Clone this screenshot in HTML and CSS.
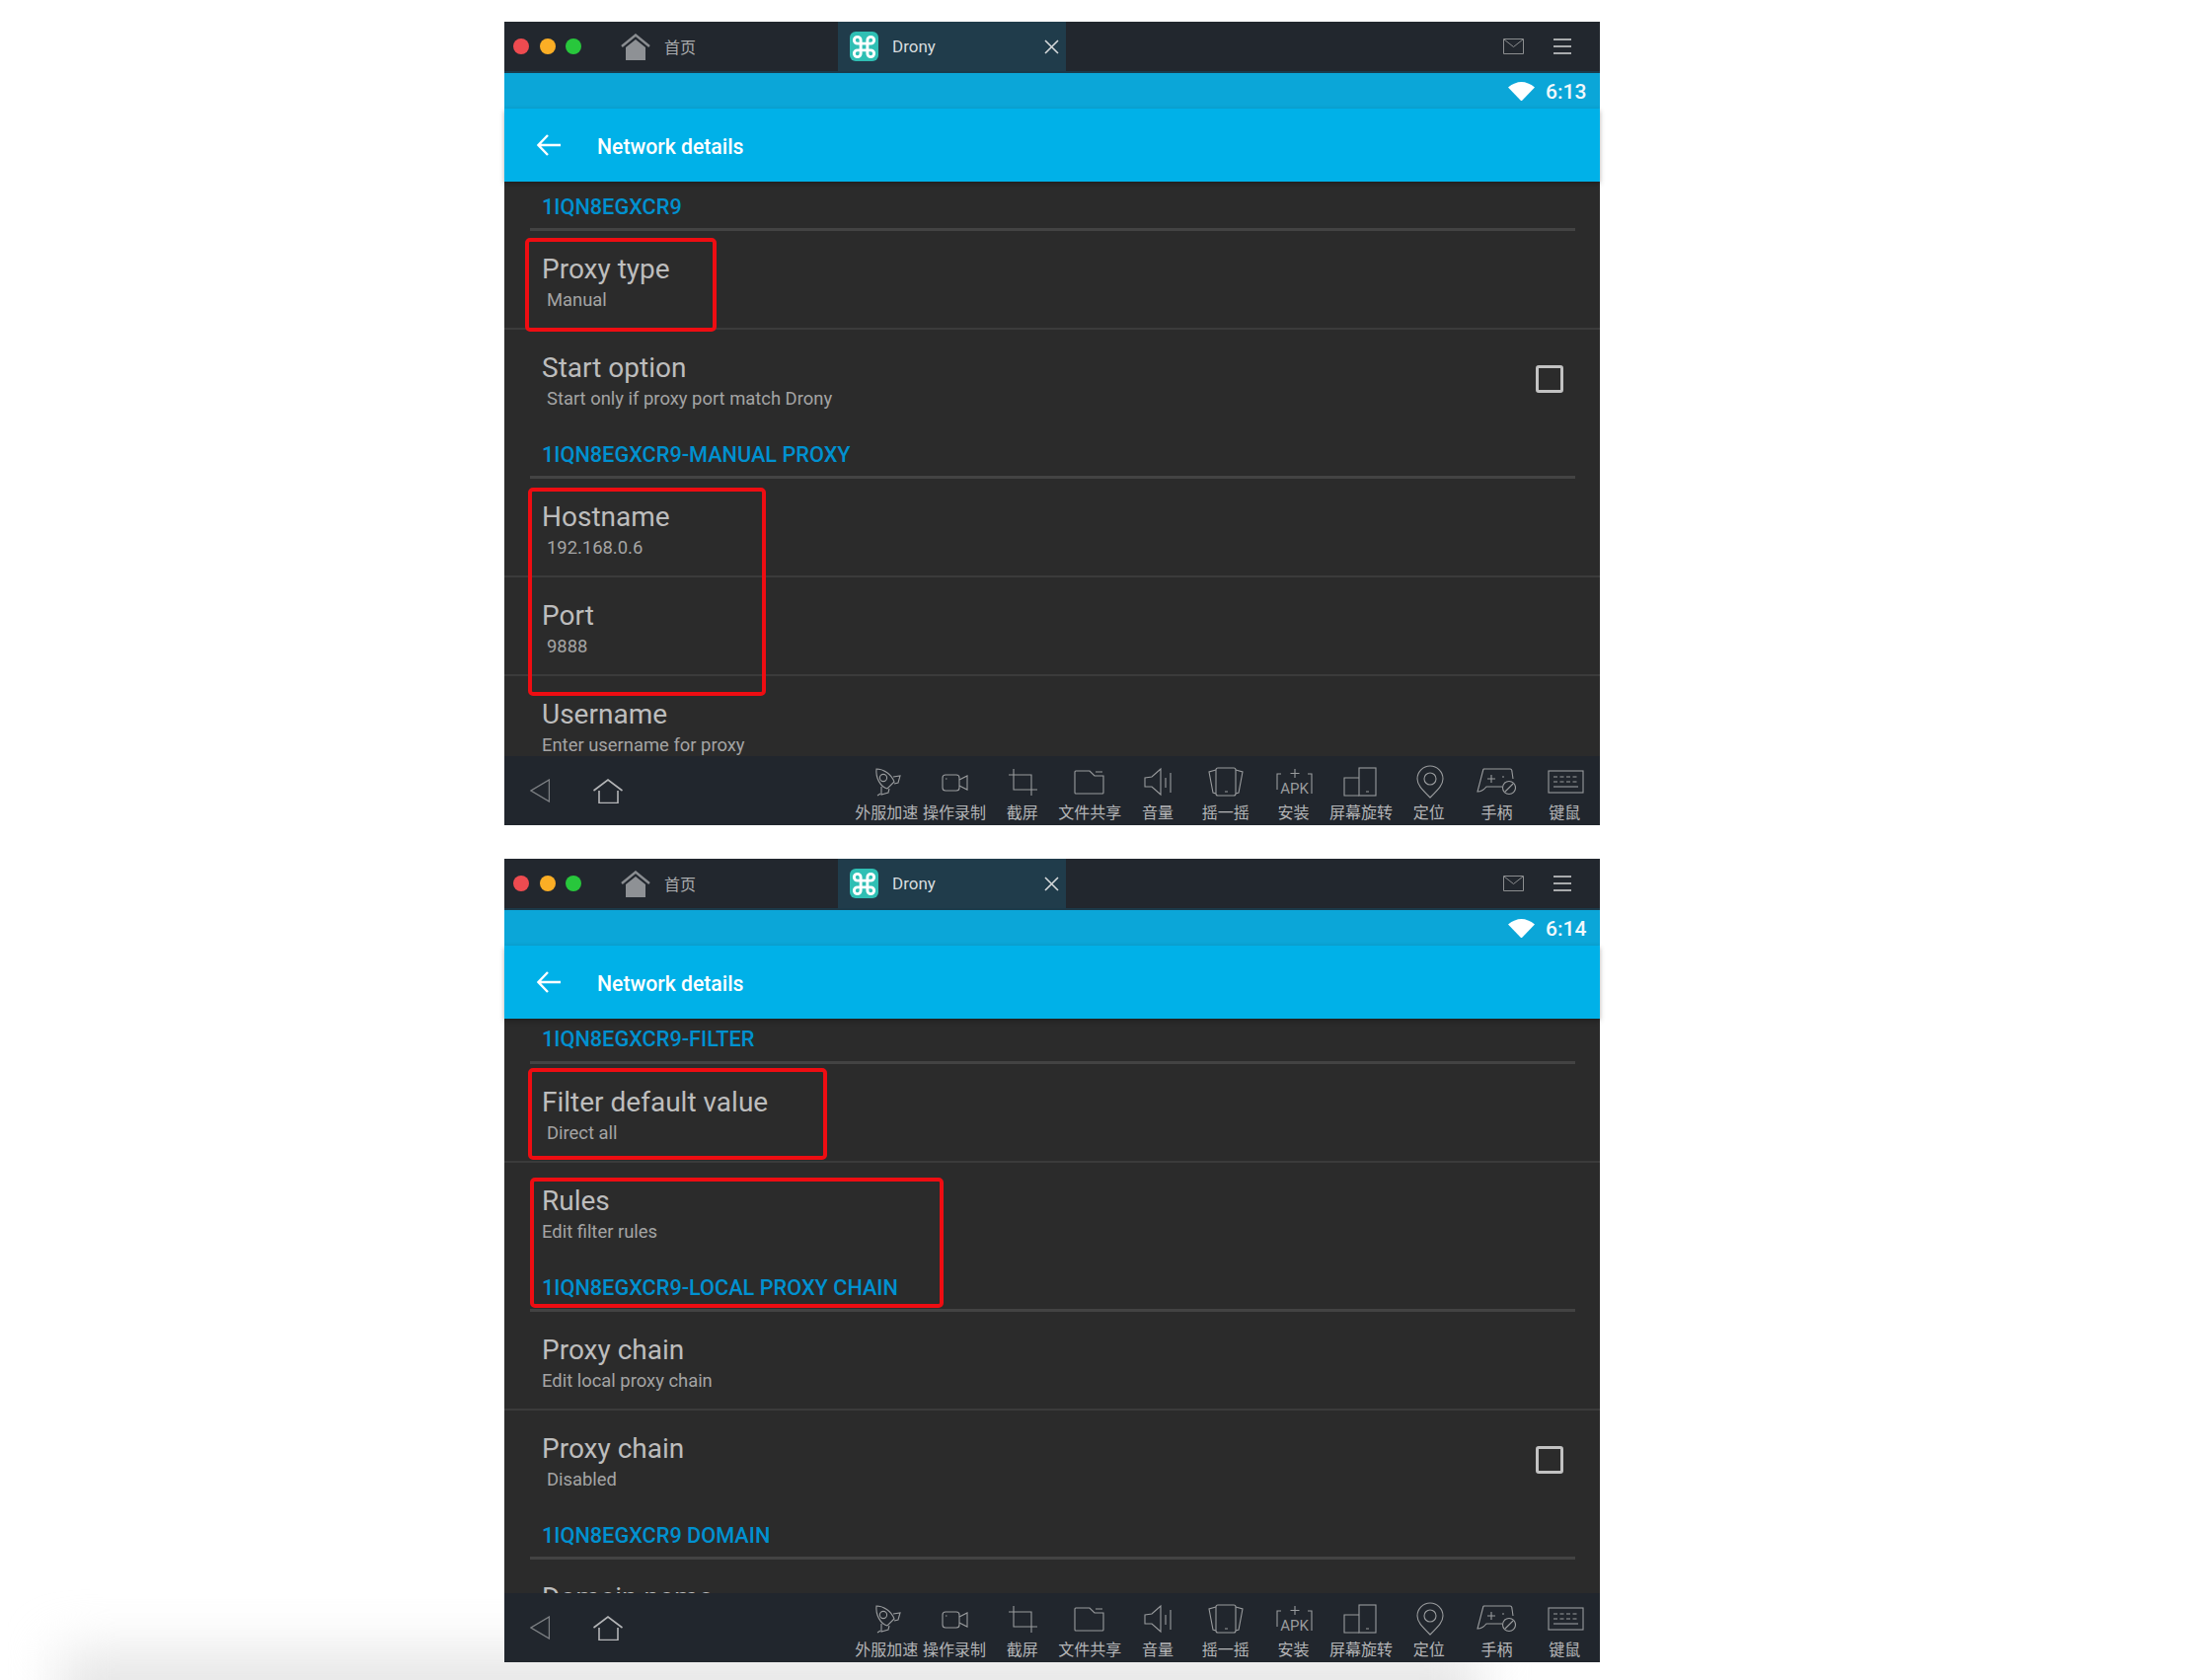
FILE: index.html
```html
<!DOCTYPE html>
<html lang="zh-CN">
<head>
	<meta charset="UTF-8">
	<title>Drony</title>
	<link rel="stylesheet" href="styles.css">
</head>
<body>
	<svg class="sprite" xmlns="http://www.w3.org/2000/svg">
		<symbol id="i-rocket" viewBox="0 0 40 34"><path d="M10 4C17 4 25 9 28 17L21 24C14 22 9 13 10 4Z"/><circle cx="17" cy="13" r="3.6"/><path d="M27 12L34 11 32 18 28 19M15 22L15 30 22 28 23 24M14 29L11 31"/></symbol>
		<symbol id="i-video" viewBox="0 0 40 34"><rect x="8" y="10" width="17" height="16" rx="3"/><path d="M25 15L33 11V25L25 21"/><path d="M11 14h1.5"/></symbol>
		<symbol id="i-crop" viewBox="0 0 40 34"><path d="M11 4V25H35M6 10H29V31"/></symbol>
		<symbol id="i-folder" viewBox="0 0 40 34"><path d="M5 7Q5 6 6 6H20L25 11H34V28Q34 29 33 29H6Q5 29 5 28ZM26 7H33"/></symbol>
		<symbol id="i-speaker" viewBox="0 0 40 34"><path d="M7 13L14 12 23 4V30L14 22 7 22ZM28 13V23M33 8V28"/></symbol>
		<symbol id="i-shake" viewBox="0 0 40 34"><rect x="10" y="3" width="20" height="28" rx="2"/><path d="M10 5L3 7 7 28 10 29M30 5L37 7 33 28 30 29M19 27h3"/></symbol>
		<symbol id="i-rotate" viewBox="0 0 40 34"><rect x="18" y="3" width="17" height="28"/><path d="M18 13H3V31H18M25 27h3"/></symbol>
		<symbol id="i-pin" viewBox="0 0 40 34"><path d="M21 33C12 24 8 20 8 14A13 13 0 0 1 34 14C34 20 30 24 21 33Z"/><circle cx="21" cy="14" r="6"/></symbol>
		<symbol id="i-pad" viewBox="0 0 40 34"><path d="M7 4H34Q36 4 36 7L37 14M7 4L1 27Q6 27 10 22H26"/><path d="M15 10V18M11 14H19M26 12h2"/><circle cx="33" cy="23" r="6.500"/><path d="M29 27L37 19"/></symbol>
		<symbol id="i-keys" viewBox="0 0 40 34"><rect x="4" y="6" width="35" height="22"/><path class="dashes" d="M9 12H34M9 17H34"/><path d="M9 22H34"/></symbol>
		<symbol id="i-command" viewBox="0 0 24 24"><path d="M15 6v12a3 3 0 1 0 3-3H6a3 3 0 1 0 3 3V6a3 3 0 1 0-3 3h12a3 3 0 1 0-3-3"/></symbol>
	</svg>

	<div class="floor-shadow"></div>

	<div class="page">
		<!-- 第一个窗口 -->
		<div class="window">
			<div class="titlebar">
				<div class="lights"><i class="light red"></i><i class="light amber"></i><i class="light green"></i></div>
				<div class="home-tab">
					<svg class="home-fill" viewBox="0 0 30 27"><path class="roof" d="M1 13L15 1.500 29 13"/><path class="house" d="M5 14L15 6 25 14V27H5Z"/></svg>
					<span>首页</span>
				</div>
				<div class="app-tab">
					<span class="logo"><svg class="logo-mark"><use href="#i-command"/></svg></span>
					<span class="app-name">Drony</span>
					<svg class="close" viewBox="0 0 15 15"><path d="M1 1L14 14M14 1L1 14"/></svg>
				</div>
				<div class="title-right">
					<svg class="mail" viewBox="0 0 21 16"><path d="M.5.500H20.500V15.500H.5ZM1 1L10.500 8.500 20 1"/></svg>
					<div class="burger"><i></i><i></i><i></i></div>
				</div>
			</div>
			<div class="statusbar">
				<svg class="wifi" viewBox="0 0 27 20"><path d="M0 6.500Q13.500-4.500 27 6.500L14 20H13Z"/></svg>
				<span class="clock">6:13</span>
			</div>
			<div class="toolbar">
				<svg class="arrow" viewBox="0 0 24 22"><path d="M24 11H2M11 1L1.500 11 11 21"/></svg>
				<span class="toolbar-title">Network details</span>
			</div>
			<div class="content">
				<div class="section section-top"><p>1IQN8EGXCR9</p><div class="rule"></div></div>
				<div class="row"><div class="row-text"><h3>Proxy type</h3><p class="inset">Manual</p></div></div>
				<div class="row no-line"><div class="row-text"><h3>Start option</h3><p class="inset">Start only if proxy port match Drony</p></div><span class="check"></span></div>
				<div class="section"><p>1IQN8EGXCR9-MANUAL PROXY</p><div class="rule"></div></div>
				<div class="row"><div class="row-text"><h3>Hostname</h3><p class="inset">192.168.0.6</p></div></div>
				<div class="row"><div class="row-text"><h3>Port</h3><p class="inset">9888</p></div></div>
				<div class="row"><div class="row-text"><h3>Username</h3><p>Enter username for proxy</p></div></div>
			</div>
			<div class="bottombar">
				<div class="nav">
					<svg class="nav-back" viewBox="0 0 20 24"><path d="M19.500 1V23L1 12Z"/></svg>
					<svg class="nav-home" viewBox="0 0 30 25"><path d="M.5 12L15 1 29.500 12M6 12V24.500H25V12"/></svg>
				</div>
				<div class="tools">
					<div class="tool"><svg><use href="#i-rocket"/></svg><span>外服加速</span></div>
					<div class="tool"><svg><use href="#i-video"/></svg><span>操作录制</span></div>
					<div class="tool"><svg><use href="#i-crop"/></svg><span>截屏</span></div>
					<div class="tool"><svg><use href="#i-folder"/></svg><span>文件共享</span></div>
					<div class="tool"><svg><use href="#i-speaker"/></svg><span>音量</span></div>
					<div class="tool"><svg><use href="#i-shake"/></svg><span>摇一摇</span></div>
					<div class="tool"><svg viewBox="0 0 40 34"><path d="M8 9H4V25M35 9H39V29M22 4V13M17.500 8.500H26.500"/><text class="apk-text" x="21.500" y="29" text-anchor="middle">APK</text></svg><span>安装</span></div>
					<div class="tool"><svg><use href="#i-rotate"/></svg><span>屏幕旋转</span></div>
					<div class="tool"><svg><use href="#i-pin"/></svg><span>定位</span></div>
					<div class="tool"><svg><use href="#i-pad"/></svg><span>手柄</span></div>
					<div class="tool"><svg><use href="#i-keys"/></svg><span>键鼠</span></div>
				</div>
			</div>
			<div class="mark mark-type"></div>
			<div class="mark mark-host"></div>
		</div>

		<!-- 第二个窗口 -->
		<div class="window">
			<div class="titlebar">
				<div class="lights"><i class="light red"></i><i class="light amber"></i><i class="light green"></i></div>
				<div class="home-tab">
					<svg class="home-fill" viewBox="0 0 30 27"><path class="roof" d="M1 13L15 1.500 29 13"/><path class="house" d="M5 14L15 6 25 14V27H5Z"/></svg>
					<span>首页</span>
				</div>
				<div class="app-tab">
					<span class="logo"><svg class="logo-mark"><use href="#i-command"/></svg></span>
					<span class="app-name">Drony</span>
					<svg class="close" viewBox="0 0 15 15"><path d="M1 1L14 14M14 1L1 14"/></svg>
				</div>
				<div class="title-right">
					<svg class="mail" viewBox="0 0 21 16"><path d="M.5.500H20.500V15.500H.5ZM1 1L10.500 8.500 20 1"/></svg>
					<div class="burger"><i></i><i></i><i></i></div>
				</div>
			</div>
			<div class="statusbar">
				<svg class="wifi" viewBox="0 0 27 20"><path d="M0 6.500Q13.500-4.500 27 6.500L14 20H13Z"/></svg>
				<span class="clock">6:14</span>
			</div>
			<div class="toolbar">
				<svg class="arrow" viewBox="0 0 24 22"><path d="M24 11H2M11 1L1.500 11 11 21"/></svg>
				<span class="toolbar-title">Network details</span>
			</div>
			<div class="content">
				<div class="section section-scrolled"><p>1IQN8EGXCR9-FILTER</p><div class="rule"></div></div>
				<div class="row"><div class="row-text"><h3>Filter default value</h3><p class="inset">Direct all</p></div></div>
				<div class="row no-line"><div class="row-text"><h3>Rules</h3><p>Edit filter rules</p></div></div>
				<div class="section"><p>1IQN8EGXCR9-LOCAL PROXY CHAIN</p><div class="rule"></div></div>
				<div class="row"><div class="row-text"><h3>Proxy chain</h3><p>Edit local proxy chain</p></div></div>
				<div class="row no-line"><div class="row-text"><h3>Proxy chain</h3><p class="inset">Disabled</p></div><span class="check"></span></div>
				<div class="section"><p>1IQN8EGXCR9 DOMAIN</p><div class="rule"></div></div>
				<div class="row"><div class="row-text"><h3>Domain name</h3></div></div>
			</div>
			<div class="bottombar">
				<div class="nav">
					<svg class="nav-back" viewBox="0 0 20 24"><path d="M19.500 1V23L1 12Z"/></svg>
					<svg class="nav-home" viewBox="0 0 30 25"><path d="M.5 12L15 1 29.500 12M6 12V24.500H25V12"/></svg>
				</div>
				<div class="tools">
					<div class="tool"><svg><use href="#i-rocket"/></svg><span>外服加速</span></div>
					<div class="tool"><svg><use href="#i-video"/></svg><span>操作录制</span></div>
					<div class="tool"><svg><use href="#i-crop"/></svg><span>截屏</span></div>
					<div class="tool"><svg><use href="#i-folder"/></svg><span>文件共享</span></div>
					<div class="tool"><svg><use href="#i-speaker"/></svg><span>音量</span></div>
					<div class="tool"><svg><use href="#i-shake"/></svg><span>摇一摇</span></div>
					<div class="tool"><svg viewBox="0 0 40 34"><path d="M8 9H4V25M35 9H39V29M22 4V13M17.500 8.500H26.500"/><text class="apk-text" x="21.500" y="29" text-anchor="middle">APK</text></svg><span>安装</span></div>
					<div class="tool"><svg><use href="#i-rotate"/></svg><span>屏幕旋转</span></div>
					<div class="tool"><svg><use href="#i-pin"/></svg><span>定位</span></div>
					<div class="tool"><svg><use href="#i-pad"/></svg><span>手柄</span></div>
					<div class="tool"><svg><use href="#i-keys"/></svg><span>键鼠</span></div>
				</div>
			</div>
			<div class="mark mark-filter"></div>
			<div class="mark mark-rules"></div>
		</div>
	</div>
</body>
</html>
```

FILE: styles.css
```css
*{
	margin: 0;
	padding: 0;
	box-sizing: border-box;
}
html,body{
	height: 1702px;
	overflow: hidden;
	background: #fff;
}
body{
	position: relative;
	font-family: Roboto, "Noto Sans CJK SC", sans-serif;
}
.sprite{
	position: absolute;
	width: 0;
	height: 0;
}
.floor-shadow{
	position: absolute;
	left: 60px;
	top: 1672px;
	width: 1440px;
	height: 90px;
	background: #e6e6e6;
	filter: blur(26px);
}
.page{
	position: relative;
	display: flex;
	flex-direction: column;
	gap: 34px;
	padding: 22px 0 0 511px;
}
.window{
	position: relative;
	width: 1110px;
	height: 814px;
	display: flex;
	flex-direction: column;
	background: #2b2b2b;
}

/* 标题栏 */
.titlebar{
	height: 52px;
	display: flex;
	align-items: stretch;
	background: #22272e;
	border-bottom: 2px solid #1b3a4a;
}
.lights{
	width: 118px;
	padding-left: 9px;
	display: flex;
	align-items: center;
	gap: 10.5px;
}
.light{
	width: 16px;
	height: 16px;
	border-radius: 50%;
}
.red{
	background: #ee4b50;
}
.amber{
	background: #fbae25;
}
.green{
	background: #28c73c;
}
.home-tab{
	width: 220px;
	display: flex;
	align-items: center;
	gap: 14px;
	color: #a9abad;
	font-size: 16px;
}
.home-fill{
	width: 30px;
	height: 27px;
}
.roof{
	fill: none;
	stroke: #8a8d91;
	stroke-width: 2.4;
}
.house{
	fill: #8e9195;
}
.app-tab{
	width: 231px;
	padding: 0 7px 0 12px;
	display: flex;
	align-items: center;
	background: #203c4b;
}
.logo{
	width: 29px;
	height: 30px;
	border-radius: 6px;
	background: #2fbfb4;
	display: flex;
	align-items: center;
	justify-content: center;
}
.logo-mark{
	width: 27px;
	height: 27px;
	fill: none;
	stroke: #fff;
	stroke-width: 2.6;
}
.app-name{
	margin-left: 14px;
	color: #d8dcdf;
	font-size: 17px;
}
.close{
	margin-left: auto;
	width: 15px;
	height: 15px;
	fill: none;
	stroke: #d6d9db;
	stroke-width: 1.6;
}
.title-right{
	margin-left: auto;
	padding-right: 29px;
	display: flex;
	align-items: center;
	gap: 30px;
}
.mail{
	width: 21px;
	height: 16px;
	fill: none;
	stroke: #8c8e90;
	stroke-width: 1;
}
.burger{
	width: 18px;
	display: flex;
	flex-direction: column;
	gap: 5px;
}
.burger i{
	height: 2px;
	background: #a9abad;
}

/* 状态栏和工具栏 */
.statusbar{
	height: 36px;
	padding-right: 15px;
	display: flex;
	align-items: center;
	justify-content: flex-end;
	gap: 11px;
	background: #0ba6d8;
}
.wifi{
	width: 27px;
	height: 20px;
	fill: #fff;
}
.clock{
	width: 40px;
	padding-top: 2px;
	color: #f2f8fb;
	font-size: 21px;
	font-weight: 500;
	white-space: nowrap;
}
.toolbar{
	height: 74px;
	padding-left: 33px;
	display: flex;
	align-items: center;
	gap: 37px;
	background: #00b1e8;
	box-shadow: 0 2px 5px rgba(0, 0, 0, 0.3);
	position: relative;
}
.arrow{
	width: 24px;
	height: 22px;
	fill: none;
	stroke: #fff;
	stroke-width: 2.4;
}
.toolbar-title{
	padding-top: 2px;
	color: #fff;
	font-size: 21.2px;
	font-weight: 500;
}

/* 列表内容 */
.content{
	flex: 1;
	min-height: 0;
	overflow: hidden;
}
.section{
	padding-top: 15px;
}
.section p{
	height: 33px;
	line-height: 24px;
	padding-left: 38px;
	color: #0091d0;
	font-size: 21.7px;
	font-weight: 500;
	white-space: nowrap;
}
.section-top{
	padding-top: 14px;
}
.section-scrolled{
	padding-top: 9px;
}
.section-scrolled p{
	height: 34px;
}
.rule{
	height: 3px;
	margin: 0 25px 0 26px;
	background: #434343;
}
.row{
	height: 100px;
	display: flex;
	padding-right: 37px;
	border-bottom: 2px solid #3b3b3b;
}
.no-line{
	border-bottom: none;
}
.row-text{
	padding: 21px 0 0 38px;
}
.row h3{
	height: 36px;
	line-height: 36px;
	color: #bdbdbd;
	font-size: 28px;
	font-weight: 400;
	white-space: nowrap;
}
.row p{
	height: 26px;
	line-height: 26px;
	color: #a4a4a4;
	font-size: 18.4px;
	white-space: nowrap;
}
.row p.inset{
	padding-left: 5px;
}
.check{
	margin-left: auto;
	align-self: center;
	width: 28px;
	height: 28px;
	border: 3px solid #c2c2c2;
	border-radius: 3px;
}

/* 底部栏 */
.bottombar{
	height: 70px;
	flex: none;
	display: flex;
	background: #21262d;
}
.nav{
	padding-left: 26px;
	display: flex;
	align-items: center;
	gap: 44px;
}
.nav-back{
	width: 20px;
	height: 24px;
	fill: none;
	stroke: #7d8084;
	stroke-width: 1.4;
}
.nav-home{
	width: 30px;
	height: 25px;
	fill: none;
	stroke: #b4b5b7;
	stroke-width: 1.6;
}
.tools{
	margin-left: auto;
	padding: 9px 1.5px 0 0;
	display: flex;
}
.tool{
	width: 68.7px;
	display: flex;
	flex-direction: column;
	align-items: center;
	gap: 5px;
}
.tool svg{
	width: 40px;
	height: 34px;
	overflow: visible;
	fill: none;
	stroke: #9a9c9e;
	stroke-width: 1.1;
}
.tool span{
	line-height: 20px;
	color: #b4b5b7;
	font-size: 16px;
	white-space: nowrap;
}
.apk-text{
	fill: #9a9c9e;
	stroke: none;
	font-size: 15px;
}
.dashes{
	stroke-dasharray: 4 2.5;
}

/* 红色标注框 */
.mark{
	position: absolute;
	border: 4px solid #ee0d12;
	border-radius: 5px;
}
.mark-type{
	left: 21px;
	top: 219px;
	width: 194px;
	height: 95px;
}
.mark-host{
	left: 24px;
	top: 472px;
	width: 241px;
	height: 211px;
}
.mark-filter{
	left: 24px;
	top: 212px;
	width: 303px;
	height: 93px;
}
.mark-rules{
	left: 26px;
	top: 323px;
	width: 419px;
	height: 132px;
}
```
